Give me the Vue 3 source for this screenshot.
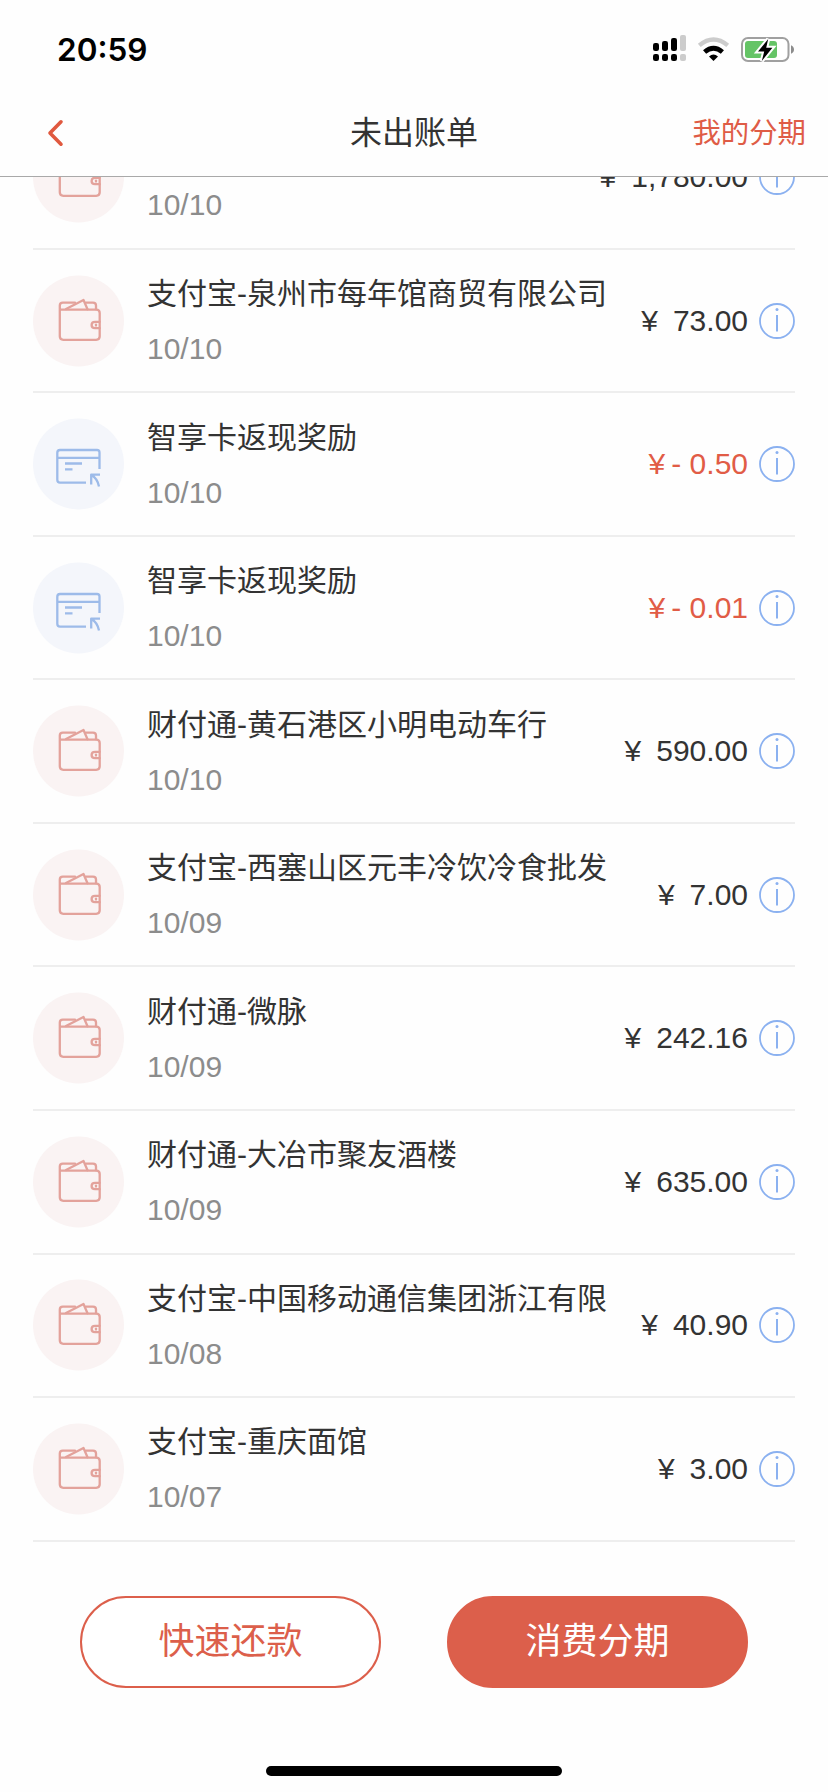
<script setup>
const rows = [
  { name: '', date: '10/10', amount: '1,780.00', kind: 'pay' },
  { name: '支付宝-泉州市每年馆商贸有限公司', date: '10/10', amount: '73.00', kind: 'pay' },
  { name: '智享卡返现奖励', date: '10/10', amount: '- 0.50', kind: 'reward' },
  { name: '智享卡返现奖励', date: '10/10', amount: '- 0.01', kind: 'reward' },
  { name: '财付通-黄石港区小明电动车行', date: '10/10', amount: '590.00', kind: 'pay' },
  { name: '支付宝-西塞山区元丰冷饮冷食批发', date: '10/09', amount: '7.00', kind: 'pay' },
  { name: '财付通-微脉', date: '10/09', amount: '242.16', kind: 'pay' },
  { name: '财付通-大冶市聚友酒楼', date: '10/09', amount: '635.00', kind: 'pay' },
  { name: '支付宝-中国移动通信集团浙江有限', date: '10/08', amount: '40.90', kind: 'pay' },
  { name: '支付宝-重庆面馆', date: '10/07', amount: '3.00', kind: 'pay' },
]
</script>

<template>
  <div class="screen">
    <header class="status">
      <span class="time">20:59</span>
      <svg class="status-icons" width="146" height="40" viewBox="650 30 146 40">
        <g fill="#000">
          <rect x="653" y="43" width="6" height="8" rx="2.2" />
          <rect x="662" y="41" width="6" height="10" rx="2.2" />
          <rect x="671" y="38" width="6" height="13" rx="2.2" />
          <rect x="653" y="54" width="6" height="7" rx="2.2" />
          <rect x="662" y="54" width="6" height="7" rx="2.2" />
          <rect x="671" y="54" width="6" height="7" rx="2.2" />
        </g>
        <g fill="#ccc">
          <rect x="680" y="35" width="6" height="16" rx="2" />
          <rect x="680" y="54" width="6" height="7" rx="2" />
        </g>
        <path d="M699.3 45.4Q713.5 33.6 727.7 45.4" fill="none" stroke="#ccc" stroke-width="4.4" />
        <path d="M704.6 52Q713.5 44.4 722.4 52" fill="none" stroke="#000" stroke-width="4.8" />
        <path d="M709 56.600Q713.500 52.400 718 56.600L713.500 61Z" fill="#000" />
        <rect x="742" y="38" width="46.500" height="23" rx="6" fill="#fff" stroke="#a0a0a0" stroke-width="2" />
        <rect x="745" y="41" width="32" height="17" rx="3" fill="#65c466" />
        <path d="M791 45.200Q794 46.500 794 49.500T791 53.800Z" fill="#8c8c8c" />
        <path d="M768.200 39L758 51.600H764.200L761.800 61L772.400 47.800H766.200Z" fill="#000" stroke="#fff" stroke-width="4" paint-order="stroke" />
      </svg>
    </header>

    <nav class="nav">
      <svg class="back" width="20" height="30" viewBox="0 0 20 30">
        <path d="M16 3.800L5 15L16 26.200" fill="none" stroke="#e0593f" stroke-width="3.600" stroke-linecap="round" stroke-linejoin="round" />
      </svg>
      <h1 class="title">未出账单</h1>
      <span class="link">我的分期</span>
    </nav>

    <main class="list">
      <div v-for="(row, i) in rows" :key="i" class="row">
        <svg v-if="row.kind === 'pay'" class="badge" viewBox="0 0 92 92">
          <circle cx="45.500" cy="46" r="45.500" fill="#faf3f3" />
          <g fill="none" stroke="#e3a29b" stroke-width="2.300" stroke-linejoin="round" stroke-linecap="round">
            <path d="M26.800 34.600H63.200Q66.700 34.600 66.700 38.100V61.300Q66.700 64.800 63.200 64.800H30.300Q26.800 64.800 26.800 61.300V30.600Q26.800 27.600 29.800 27.600H42" />
            <path d="M53 27.600H60Q63 27.600 63 30.400V34.300" />
            <path d="M33 34L50.500 25L54.500 34.300" />
            <path d="M66.700 46.800H62Q58.600 46.800 58.600 50T62 53.200H66.700" />
            <path d="M63 49.600V50.600" />
          </g>
        </svg>
        <svg v-else class="badge" viewBox="0 0 92 92">
          <circle cx="45.500" cy="46" r="45.500" fill="#f4f6fb" />
          <g fill="none" stroke="#9dbbe9" stroke-width="2.300" stroke-linejoin="round">
            <path d="M66.500 51V34.500Q66.500 32 64 32H27Q24.300 32 24.300 34.800V61.800Q24.300 64.600 27 64.600H53" />
            <path d="M24.300 39.800H66.500M32 45.500H49M32 51.400H39.500" />
            <path d="M67 56.600H58.200V66.500M58.500 57Q64.500 60.500 66 68.500" />
          </g>
        </svg>
        <div class="info">
          <div class="name">{{ row.name }}</div>
          <div class="date">{{ row.date }}</div>
        </div>
        <div class="amount" :class="row.kind">
          <span class="yen">¥</span><span>{{ row.amount }}</span>
        </div>
        <svg class="hint" width="36" height="36" viewBox="0 0 36 36">
          <circle cx="18" cy="18" r="17" fill="none" stroke="#8bb1f0" stroke-width="1.800" />
          <path d="M18 12V28.500" stroke="#8bb1f0" stroke-width="2" />
          <circle cx="18" cy="6.500" r="1.500" fill="#8bb1f0" />
        </svg>
      </div>
    </main>

    <footer class="actions">
      <button class="btn outline">快速还款</button>
      <button class="btn solid">消费分期</button>
    </footer>
    <div class="home"></div>
  </div>
</template>

<style>
body {
  background: #fff;
}
</style>

<style scoped>
.screen {
  width: 828px;
  height: 1792px;
  display: flex;
  flex-direction: column;
  overflow: hidden;
  background: #fefefe;
  color: #333;
  font-family: "Liberation Sans", "Noto Sans CJK SC", sans-serif;
}
.status {
  height: 90px;
  flex: none;
  box-sizing: border-box;
  padding: 0 32px 0 57px;
  display: flex;
  justify-content: space-between;
  align-items: flex-start;
}
.time {
  margin-top: 30px;
  font: 600 31.500px/40px Inter, sans-serif;
  color: #000;
}
.status-icons {
  margin-top: 30px;
}
.nav {
  height: 87px;
  flex: none;
  box-sizing: border-box;
  border-bottom: 1px solid #a9a9a9;
  padding: 0 22px 0 45px;
  display: grid;
  grid-template-columns: 305px auto 1fr;
  align-items: center;
}
.title {
  margin: 0;
  font-weight: 400;
  font-size: 32px;
  line-height: 40px;
}
.link {
  justify-self: end;
  font-size: 28.400px;
  line-height: 40px;
  color: #df5c46;
}
.list {
  height: 1366px;
  flex: none;
  padding: 0 33px;
  overflow: hidden;
}
.row {
  height: 143.560px;
  box-sizing: border-box;
  border-bottom: 2px solid #eee;
  display: flex;
  align-items: center;
}
.row:first-child {
  margin-top: -70.800px;
}
.badge {
  width: 92px;
  height: 92px;
  flex: none;
}
.info {
  flex: 1;
  margin-left: 22px;
  padding-top: 2px;
  white-space: nowrap;
}
.name {
  height: 44px;
  font-size: 30px;
  line-height: 44px;
}
.date {
  margin-top: 11px;
  font-size: 30px;
  line-height: 44px;
  color: #8c8c8c;
}
.amount {
  display: flex;
  align-items: baseline;
  font-size: 30px;
  line-height: 44px;
  white-space: nowrap;
}
.yen {
  margin-right: 15px;
}
.reward {
  color: #e15c46;
}
.reward .yen {
  margin-right: 6px;
}
.hint {
  margin-left: 11px;
  flex: none;
}
.actions {
  margin-top: 53px;
  flex: none;
  display: flex;
  padding: 0 80px;
  justify-content: space-between;
}
.btn {
  width: 301px;
  height: 92px;
  padding: 0;
  box-sizing: border-box;
  border: 2px solid #dc5f4b;
  border-radius: 46px;
  font-family: inherit;
  font-size: 36px;
  line-height: 48px;
}
.outline {
  background: #fff;
  color: #dc5f4b;
}
.solid {
  background: #dc5f4b;
  color: #fff;
}
.home {
  width: 296px;
  height: 10px;
  margin: 78px auto 0;
  border-radius: 5px;
  background: #000;
}
</style>
